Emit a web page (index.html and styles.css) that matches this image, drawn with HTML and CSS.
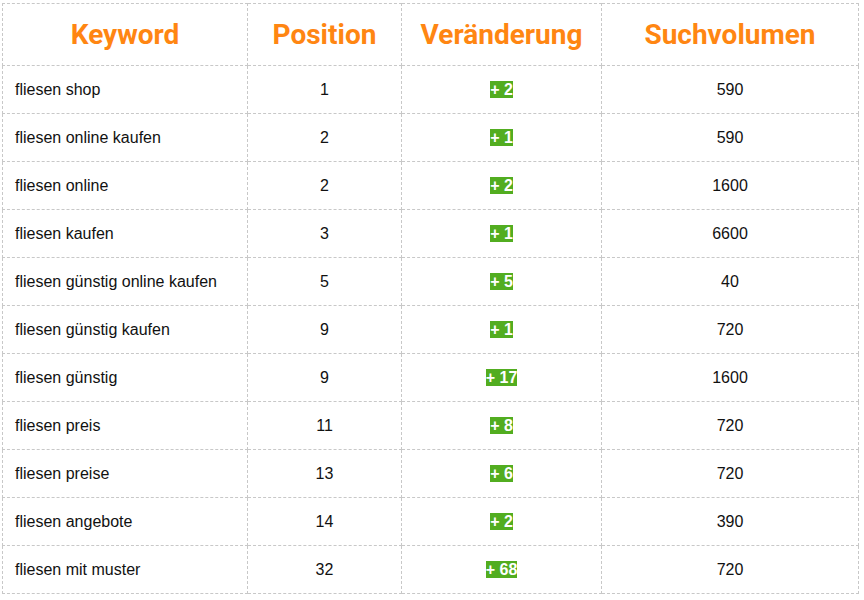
FILE: index.html
```html
<!DOCTYPE html>
<html lang="de">
<head>
<meta charset="utf-8">
<link rel="stylesheet" href="styles.css">
</head>
<body>
<table class="kw-table">
  <colgroup>
    <col class="c1"><col class="c2"><col class="c3"><col class="c4">
  </colgroup>
  <thead>
    <tr><th>Keyword</th><th>Position</th><th>Veränderung</th><th>Suchvolumen</th></tr>
  </thead>
  <tbody>
    <tr><td class="kw">fliesen shop</td><td>1</td><td><span class="badge">+ 2</span></td><td>590</td></tr>
    <tr><td class="kw">fliesen online kaufen</td><td>2</td><td><span class="badge">+ 1</span></td><td>590</td></tr>
    <tr><td class="kw">fliesen online</td><td>2</td><td><span class="badge">+ 2</span></td><td>1600</td></tr>
    <tr><td class="kw">fliesen kaufen</td><td>3</td><td><span class="badge">+ 1</span></td><td>6600</td></tr>
    <tr><td class="kw">fliesen günstig online kaufen</td><td>5</td><td><span class="badge">+ 5</span></td><td>40</td></tr>
    <tr><td class="kw">fliesen günstig kaufen</td><td>9</td><td><span class="badge">+ 1</span></td><td>720</td></tr>
    <tr><td class="kw">fliesen günstig</td><td>9</td><td><span class="badge">+ 17</span></td><td>1600</td></tr>
    <tr><td class="kw">fliesen preis</td><td>11</td><td><span class="badge">+ 8</span></td><td>720</td></tr>
    <tr><td class="kw">fliesen preise</td><td>13</td><td><span class="badge">+ 6</span></td><td>720</td></tr>
    <tr><td class="kw">fliesen angebote</td><td>14</td><td><span class="badge">+ 2</span></td><td>390</td></tr>
    <tr><td class="kw">fliesen mit muster</td><td>32</td><td><span class="badge">+ 68</span></td><td>720</td></tr>
  </tbody>
</table>
</body>
</html>
```
FILE: styles.css
```css
html, body {
  margin: 0;
  background: #ffffff;
}
body {
  padding: 3px 0 0 2px;
  font-family: "Liberation Sans", Arial, sans-serif;
}
.kw-table {
  border-collapse: collapse;
  table-layout: fixed;
  width: 856px;
}
.c1 { width: 245px; }
.c2 { width: 154px; }
.c3 { width: 200px; }
.c4 { width: 257px; }
.kw-table th,
.kw-table td {
  border: 1px dashed #c8c8c8;
  text-align: center;
  padding: 0;
}
.kw-table th {
  height: 61px;
  font-family: Roboto, "Liberation Sans", sans-serif;
  font-weight: 700;
  font-size: 28px;
  line-height: 32px;
  color: #ff8612;
}
.kw-table td {
  height: 47px;
  font-size: 16px;
  color: #111111;
}
.kw-table td.kw {
  text-align: left;
  padding-left: 12px;
}
.badge {
  display: inline-block;
  background: #52ad20;
  color: #ffffff;
  font-weight: 700;
  font-size: 16px;
  line-height: 17px;
  padding: 0;
}
```
